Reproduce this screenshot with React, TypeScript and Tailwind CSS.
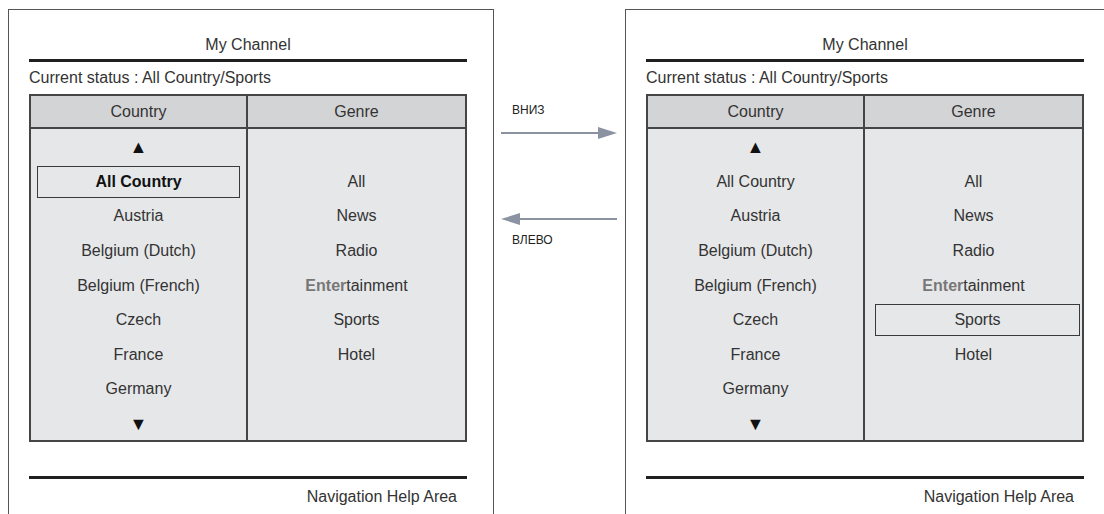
import type { ReactNode } from 'react';

const COUNTRIES = ['All Country', 'Austria', 'Belgium (Dutch)', 'Belgium (French)', 'Czech', 'France', 'Germany'];
const GENRES = ['All', 'News', 'Radio', 'ENT', 'Sports', 'Hotel'];

function Row({ children, selected = false, wide = false }: { children?: ReactNode; selected?: boolean; wide?: boolean }) {
  return (
    <div className="h-[34.6px] flex items-center justify-center pt-[2px]">
      {selected ? (
        <div
          className={`h-[32px] flex items-center justify-center border-[1.5px] border-[#3a3a3a] ${
            wide ? 'w-full ml-[10px] mr-[2px] font-normal' : 'w-full mx-[6px] font-bold text-[#111]'
          }`}
        >
          {children}
        </div>
      ) : (
        children
      )}
    </div>
  );
}

function Genre({ name }: { name: string }) {
  if (name === 'ENT') {
    return (
      <span>
        <span className="font-bold text-[#777]">Enter</span>tainment
      </span>
    );
  }
  return <span>{name}</span>;
}

function Screen({ focus, className }: { focus: 'country' | 'genre'; className: string }) {
  return (
    <div className={`shrink-0 border-[#555] border-t-[1.5px] border-l-[1.5px] pl-[20px] ${className}`}>
      <div className="w-[438px]">
        <div className="pt-[25px] h-[49px] text-center leading-[20px]">My Channel</div>
        <div className="h-[3px] bg-[#1f1f1f]" />
        <div className="mt-[6px] leading-[20px]">Current status : All Country/Sports</div>
        <div className="mt-[6px] border-2 border-[#454545]">
          <div className="grid grid-cols-2 h-[33px] bg-[#d3d4d6] border-b-2 border-[#454545]">
            <div className="flex items-center justify-center border-r-2 border-[#454545]">Country</div>
            <div className="flex items-center justify-center">Genre</div>
          </div>
          <div className="grid grid-cols-2 bg-[#e6e7e9]">
            <div className="border-r-2 border-[#454545]">
              <Row>
                <span className="text-[18px] leading-none text-[#111]">▲</span>
              </Row>
              {COUNTRIES.map((c, i) => (
                <Row key={c} selected={focus === 'country' && i === 0}>
                  {c}
                </Row>
              ))}
              <Row>
                <span className="text-[18px] leading-none text-[#111]">▼</span>
              </Row>
            </div>
            <div>
              <Row />
              {GENRES.map((g) => (
                <Row key={g} selected={focus === 'genre' && g === 'Sports'} wide>
                  <Genre name={g} />
                </Row>
              ))}
            </div>
          </div>
        </div>
        <div className="mt-[34px] h-[3px] bg-[#1f1f1f]" />
        <div className="mt-[8px] pr-[10px] text-right leading-[20px]">Navigation Help Area</div>
      </div>
    </div>
  );
}

function Arrow({ dir }: { dir: 'right' | 'left' }) {
  return (
    <svg width="116" height="14" viewBox="0 0 116 14" className="block">
      {dir === 'right' ? (
        <>
          <line x1="0" y1="7" x2="100" y2="7" stroke="#8b92a1" strokeWidth="2.2" />
          <polygon points="97,1 116,7 97,13" fill="#8b92a1" />
        </>
      ) : (
        <>
          <line x1="16" y1="7" x2="116" y2="7" stroke="#8b92a1" strokeWidth="2.2" />
          <polygon points="19,1 0,7 19,13" fill="#8b92a1" />
        </>
      )}
    </svg>
  );
}

export default function App() {
  return (
    <div
      className="w-[1104px] h-[514px] overflow-hidden bg-white flex text-[16px] text-[#333]"
      style={{ fontFamily: '"Liberation Sans", Arial, sans-serif' }}
    >
      <Screen focus="country" className="ml-[8px] mt-[9px] w-[486px] h-[505px] border-r-[1.5px]" />
      <div className="w-[131px] shrink-0 pl-[7px] pt-[102px]">
        <div className="pl-[11px] text-[12px] leading-[16px] text-[#222]">ВНИЗ</div>
        <div className="mt-[8px]">
          <Arrow dir="right" />
        </div>
        <div className="mt-[72px]">
          <Arrow dir="left" />
        </div>
        <div className="mt-[6px] pl-[11px] text-[12px] leading-[16px] text-[#222]">ВЛЕВО</div>
      </div>
      <Screen focus="genre" className="mt-[9px] w-[500px] h-[505px]" />
    </div>
  );
}
